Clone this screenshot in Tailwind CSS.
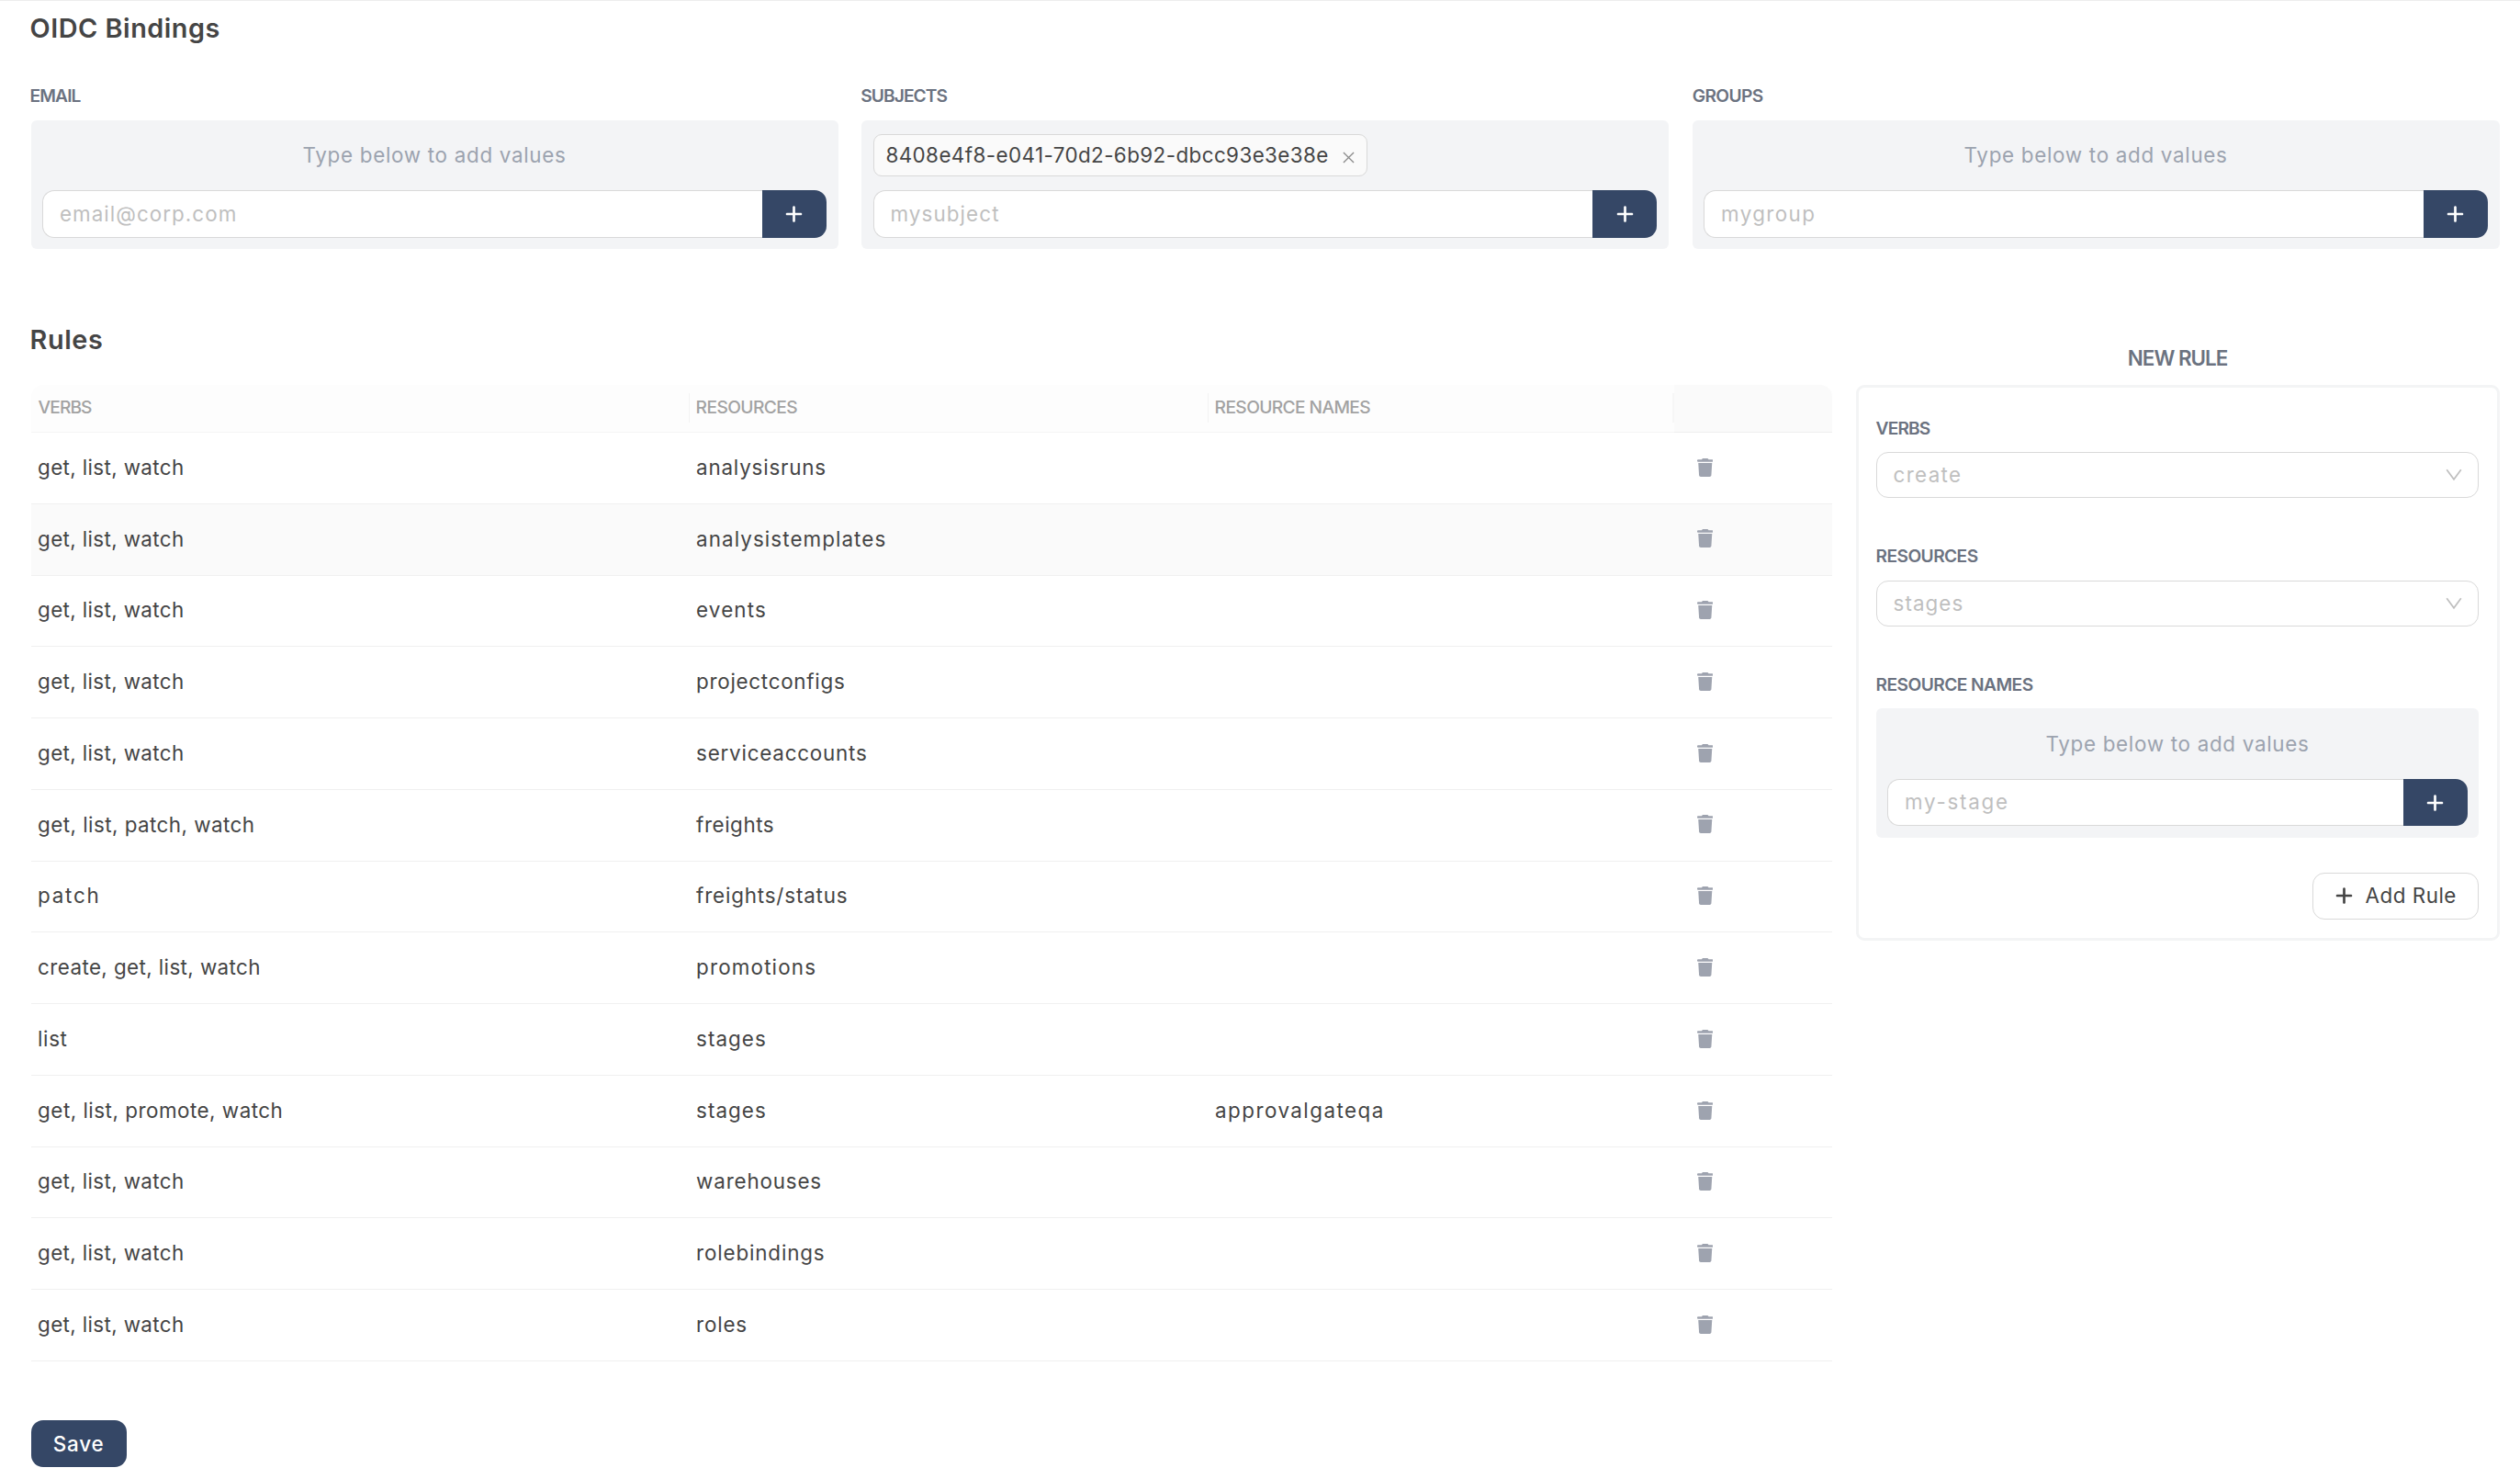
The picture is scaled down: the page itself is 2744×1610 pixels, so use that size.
<!DOCTYPE html>
<html lang="en">
<head>
  <meta charset="UTF-8" />
  <meta name="viewport" content="width=device-width, initial-scale=1.0" />
  <title>Edit Role</title>
  <script src="https://cdn.jsdelivr.net/npm/@tailwindcss/browser@4"></script>
</head>
<body class="bg-white font-[Inter,sans-serif] text-[22.4px] text-[#454545]">

  <svg class="hidden">
    <symbol id="plus" viewBox="0 0 448 512"><path fill="currentColor" d="M256 80c0-17.7-14.3-32-32-32s-32 14.3-32 32V224H48c-17.7 0-32 14.3-32 32s14.3 32 32 32H192V432c0 17.7 14.3 32 32 32s32-14.3 32-32V288H400c17.7 0 32-14.3 32-32s-14.3-32-32-32H256V80z"/></symbol>
    <symbol id="trash" viewBox="0 0 448 512"><path fill="currentColor" d="M135.2 17.7L128 32H32C14.3 32 0 46.3 0 64S14.3 96 32 96H416c17.7 0 32-14.3 32-32s-14.3-32-32-32H320l-7.2-14.3C307.4 6.8 296.3 0 284.2 0H163.8c-12.1 0-23.2 6.8-28.6 17.7zM416 128H32L53.2 467c1.6 25.3 22.6 45 47.9 45H346.9c25.3 0 46.3-19.7 47.9-45L416 128z"/></symbol>
    <symbol id="down" viewBox="0 0 18 14"><path fill="none" stroke="currentColor" stroke-width="1.7" d="M1.2 1.2L9 11.8L16.8 1.2"/></symbol>
    <symbol id="close" viewBox="0 0 14 14"><path fill="none" stroke="currentColor" stroke-width="1.4" d="M1 1L13 13M13 1L1 13"/></symbol>
  </svg>

  <main class="border-t border-[#ededed] pl-[33.6px] pr-[22.4px] pt-[9.5px]">
    <h2 class="text-[28.8px] leading-10 font-semibold tracking-[0.52px] -indent-px">OIDC Bindings</h2>

    <div class="mt-[41.5px] grid grid-cols-3 gap-[25.6px]">
      <div>
        <div class="text-[19.2px] leading-6 font-semibold text-[#6b7280] tracking-[-0.9px] -indent-px">EMAIL</div>
        <div class="mt-[15px] rounded-md bg-[#f3f4f6] px-[12.8px] pt-[15px] pb-3">
          <div class="flex h-[46px] items-center justify-center text-[#9ca3af] tracking-[0.7px]">Type below to add values</div>
          <div class="mt-[15px] flex h-[52px]">
            <div class="flex grow items-center rounded-l-[13px] border border-r-0 border-[#d9d9d9] bg-white pl-[17.5px] pb-px text-[#bfbfbf] tracking-[1.05px]">email@corp.com</div>
            <button class="flex w-[70px] items-center justify-center rounded-r-[13px] bg-[#354766] text-white"><svg class="h-[22px] w-[19px]"><use href="#plus"/></svg></button>
          </div>
        </div>
      </div>
      <div>
        <div class="text-[19.2px] leading-6 font-semibold text-[#6b7280] tracking-[-0.9px] -indent-px">SUBJECTS</div>
        <div class="mt-[15px] rounded-md bg-[#f3f4f6] px-[12.8px] pt-[15px] pb-3">
          <div class="flex h-[46px]">
            <div class="flex w-[538px] items-center justify-between rounded-[9px] border border-[#d9d9d9] bg-[#fafafa] pl-[12.5px] pr-[13px]">
              <span class="whitespace-nowrap tracking-[0.42px]">8408e4f8-e041-70d2-6b92-dbcc93e3e38e</span>
              <svg class="mt-1 size-[13px] text-[#8c8c8c]"><use href="#close"/></svg>
            </div>
          </div>
          <div class="mt-[15px] flex h-[52px]">
            <div class="flex grow items-center rounded-l-[13px] border border-r-0 border-[#d9d9d9] bg-white pl-[17.5px] pb-px text-[#bfbfbf] tracking-[1.1px]">mysubject</div>
            <button class="flex w-[70px] items-center justify-center rounded-r-[13px] bg-[#354766] text-white"><svg class="h-[22px] w-[19px]"><use href="#plus"/></svg></button>
          </div>
        </div>
      </div>
      <div>
        <div class="text-[19.2px] leading-6 font-semibold text-[#6b7280] tracking-[-0.6px]">GROUPS</div>
        <div class="mt-[15px] rounded-md bg-[#f3f4f6] px-[12.8px] pt-[15px] pb-3">
          <div class="flex h-[46px] items-center justify-center text-[#9ca3af] tracking-[0.7px]">Type below to add values</div>
          <div class="mt-[15px] flex h-[52px]">
            <div class="flex grow items-center rounded-l-[13px] border border-r-0 border-[#d9d9d9] bg-white pl-[17.5px] pb-px text-[#bfbfbf] tracking-[1.4px]">mygroup</div>
            <button class="flex w-[70px] items-center justify-center rounded-r-[13px] bg-[#354766] text-white"><svg class="h-[22px] w-[19px]"><use href="#plus"/></svg></button>
          </div>
        </div>
      </div>
    </div>

    <div class="mt-[78.5px] flex items-start justify-between">
      <section class="w-[1961px]">
        <h2 class="text-[28.8px] leading-10 font-semibold tracking-[0.6px] -indent-px">Rules</h2>

        <div class="mt-[29.5px] grid h-[52px] grid-cols-[717px_565px_507px_172px] text-[19.2px] font-medium text-[#a2a2a2]">
          <div class="flex items-center justify-between rounded-tl-[13px] border-b border-[#f5f5f5] bg-[#fdfdfd] pl-2 pb-0.5 tracking-[-0.93px]">VERBS<span class="h-8 w-px bg-[#f3f3f3]"></span></div>
          <div class="flex items-center justify-between border-b border-[#f5f5f5] bg-[#fdfdfd] pl-[7px] pb-0.5 tracking-[-0.6px]">RESOURCES<span class="h-8 w-px bg-[#f3f3f3]"></span></div>
          <div class="flex items-center justify-between border-b border-[#f5f5f5] bg-[#fdfdfd] pl-[7px] pb-0.5 tracking-[-0.62px]">RESOURCE NAMES<span class="h-8 w-0.5 bg-[#f6f6f6]"></span></div>
          <div class="rounded-tr-[13px] border-b border-[#efefef] bg-[#fafafa]"></div>
        </div>
        <div id="rules"></div>
      </section>

      <aside class="w-[701px] pt-[28.5px]">
        <div class="text-center leading-6 font-semibold text-[#6b7280] tracking-[-0.97px]">NEW RULE</div>
        <div class="mt-[17px] h-[605px] rounded-[9px] border-3 border-[#f3f4f5] pt-8 pr-5 pl-[19px]">
          <div class="text-[19.2px] leading-6 font-semibold text-[#6b7280] tracking-[-0.88px]">VERBS</div>
          <div class="mt-3.5 flex h-[50px] items-center justify-between rounded-[13px] border border-[#d9d9d9] pr-[17px] pl-[18px] pb-px text-[#bfbfbf]">
            <span class="tracking-[1.3px]">create</span>
            <svg class="h-3.5 w-[18px]"><use href="#down"/></svg>
          </div>
          <div class="mt-[51px] text-[19.2px] leading-6 font-semibold text-[#6b7280] tracking-[-0.59px]">RESOURCES</div>
          <div class="mt-[15px] flex h-[50px] items-center justify-between rounded-[13px] border border-[#d9d9d9] pr-[17px] pl-[18px] pb-px text-[#bfbfbf]">
            <span class="tracking-[1.05px]">stages</span>
            <svg class="h-3.5 w-[18px]"><use href="#down"/></svg>
          </div>
          <div class="mt-[51px] text-[19.2px] leading-6 font-semibold text-[#6b7280] tracking-[-0.57px]">RESOURCE NAMES</div>
          <div class="mt-3.5 rounded-md bg-[#f3f4f6] pr-3 pl-[12.8px] pt-4 pb-[13px]">
            <div class="flex h-[46px] items-center justify-center text-[#9ca3af] tracking-[0.7px]">Type below to add values</div>
            <div class="mt-[15px] flex h-[51px]">
              <div class="flex grow items-center rounded-l-[13px] border border-r-0 border-[#d9d9d9] bg-white pl-[17.5px] pb-px text-[#bfbfbf] tracking-[1.75px]">my-stage</div>
              <button class="flex w-[70px] items-center justify-center rounded-r-[13px] bg-[#354766] text-white"><svg class="h-[22px] w-[19px]"><use href="#plus"/></svg></button>
            </div>
          </div>
          <div class="mt-[38px] flex justify-end">
            <button class="flex h-[51px] w-[181px] items-center rounded-[13px] border border-[#d9d9d9] pl-6 pb-0.5 tracking-[0.5px]">
              <svg class="mr-3.5 h-[22px] w-[19px]"><use href="#plus"/></svg>Add Rule
            </button>
          </div>
        </div>
      </aside>
    </div>

    <button class="mt-16 h-[51px] w-[104px] rounded-[13px] bg-[#354766] font-medium text-white tracking-[0.8px]">Save</button>
  </main>

  <script>
    // [verbs, resource, resource name, verbs tracking, resource tracking]
    const rules = [
      ["get, list, watch", "analysisruns", "", "tracking-[0.36px]", "tracking-[0.8px]"],
      ["get, list, watch", "analysistemplates", "", "tracking-[0.36px]", "tracking-[1.07px]"],
      ["get, list, watch", "events", "", "tracking-[0.36px]", "tracking-[1.15px]"],
      ["get, list, watch", "projectconfigs", "", "tracking-[0.36px]", "tracking-[0.72px]"],
      ["get, list, watch", "serviceaccounts", "", "tracking-[0.36px]", "tracking-[0.78px]"],
      ["get, list, patch, watch", "freights", "", "tracking-[0.45px]", "tracking-[0.55px]"],
      ["patch", "freights/status", "", "tracking-[1.75px]", "tracking-[0.82px]"],
      ["create, get, list, watch", "promotions", "", "tracking-[0.4px]", "tracking-[1.16px]"],
      ["list", "stages", "", "tracking-[0.6px]", "tracking-[1.05px]"],
      ["get, list, promote, watch", "stages", "approvalgateqa", "tracking-[0.5px]", "tracking-[1.05px]"],
      ["get, list, watch", "warehouses", "", "tracking-[0.36px]", "tracking-[0.82px]"],
      ["get, list, watch", "rolebindings", "", "tracking-[0.36px]", "tracking-[0.85px]"],
      ["get, list, watch", "roles", "", "tracking-[0.36px]", "tracking-[0.8px]"],
    ];

    const list = document.getElementById("rules");
    rules.forEach(([verbs, resource, name, verbsClass, resourceClass], i) => {
      const bg = i === 1 ? "bg-[#fafafa]" : "bg-white";
      list.innerHTML += `
        <div class="grid h-[77.77px] grid-cols-[717px_565px_507px_172px] items-center border-b border-[#f0f0f0] pb-[1.5px] ${bg}">
          <span class="pl-[7.5px] ${verbsClass}">${verbs}</span>
          <span class="pl-[7.5px] ${resourceClass}">${resource}</span>
          <span class="pl-[7.5px] tracking-[1.45px]">${name}</span>
          <svg class="ml-[25px] h-5 w-[17.5px] text-[#9ea3af]"><use href="#trash"/></svg>
        </div>`;
    });
  </script>
</body>
</html>
